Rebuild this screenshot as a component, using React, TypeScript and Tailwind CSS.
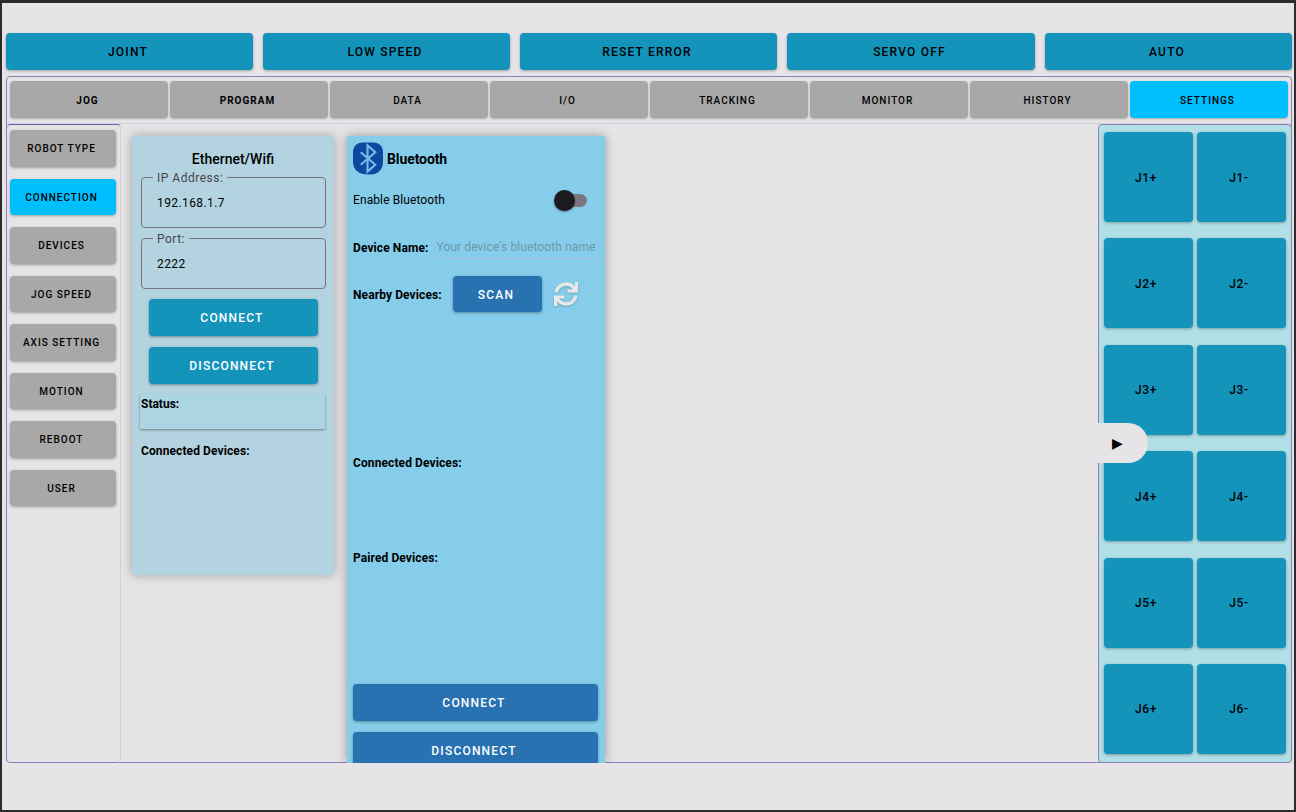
import { FaSync } from "react-icons/fa";

const TOP = ["JOINT", "LOW SPEED", "RESET ERROR", "SERVO OFF", "AUTO"];
const TABS = ["JOG", "PROGRAM", "DATA", "I/O", "TRACKING", "MONITOR", "HISTORY", "SETTINGS"];
const SIDE = ["ROBOT TYPE", "CONNECTION", "DEVICES", "JOG SPEED", "AXIS SETTING", "MOTION", "REBOOT", "USER"];
const JOINTS = ["J1", "J2", "J3", "J4", "J5", "J6"];

function Outlined({ label, value }: { label: string; value: string }) {
  return (
    <fieldset className="h-[56px] rounded border border-[#79747e] pl-[11px]">
      <legend className="relative top-px px-1 text-[12px] leading-[10px] tracking-[0.5px] text-[#49454f]">{label}</legend>
      <div className="mt-[12px] pl-1 text-[12px] leading-[18px] tracking-[0.4px] text-black">{value}</div>
    </fieldset>
  );
}

export default function App() {
  return (
    <div className="h-[812px] w-[1296px] overflow-hidden border-x-2 border-t-[3px] border-b-2 border-[#2b2b2d] bg-[#e6e4e6] font-['Roboto',sans-serif] text-black">
      {/* Top command buttons */}
      <div className="mt-[30px] flex h-[37px] gap-[10px] pl-1 pr-[2px]">
        {TOP.map((t, i) => (
          <button
            key={t}
            className={`${i === 2 ? "w-[257px]" : i === 3 ? "w-[248px]" : "w-[247px]"} rounded bg-[#1594bb] pr-[3px] text-[12px] font-medium tracking-[1.2px] shadow-[0_1px_3px_rgba(0,0,0,0.3)]`}
          >
            {t}
          </button>
        ))}
      </div>

      {/* Tabbed frame */}
      <div className="ml-1 mt-[6px] flex h-[687px] w-[1286px] flex-col rounded border border-[#8d7fb8]">
        <div className="flex h-[47px] shrink-0 gap-[2px] border-b border-[#d2cfda] pl-[3px] pt-1">
          {TABS.map((t, i) => (
            <button
              key={t}
              className={`h-[37px] w-[158px] rounded pr-[3px] pt-px text-[10px] tracking-[1px] shadow-[0_1px_2px_rgba(0,0,0,0.25)] ${i < 2 ? "font-bold" : "font-medium"} ${i === 7 ? "bg-[#00bfff]" : "bg-[#a8a8a8]"}`}
            >
              {t}
            </button>
          ))}
        </div>

        <div className="relative -mb-px -mr-px flex min-h-0 flex-1 overflow-hidden">
          {/* Side menu */}
          <div className="flex w-[114px] shrink-0 flex-col gap-[12px] rounded border-r border-t border-r-[#d2cfda] border-t-[#6a5ca8] pl-[3px] pt-[5px]">
            {SIDE.map((s, i) => (
              <button
                key={s}
                className={`h-[36.5px] w-[106px] shrink-0 rounded pr-[3px] pt-px text-[10px] font-medium tracking-[1px] shadow-[0_1px_3px_rgba(0,0,0,0.3)] ${i === 1 ? "bg-[#00bfff]" : "bg-[#a8a8a8]"}`}
              >
                {s}
              </button>
            ))}
          </div>

          {/* Ethernet panel */}
          <div className="ml-[11px] mt-[12px] flex h-[439px] w-[202px] shrink-0 flex-col bg-[#b2d3df] px-[8px] shadow-[0_0_10px_rgba(0,0,0,0.3)]">
            <div className="mt-[14px] text-center text-[14px] font-medium leading-[18px]">Ethernet/Wifi</div>
            <div className="mt-[4px] flex flex-col gap-[5px] pl-px">
              <Outlined label="IP Address:" value="192.168.1.7" />
              <Outlined label="Port:" value="2222" />
            </div>
            <button className="ml-[9px] mr-[8px] mt-[10px] h-[36.5px] shrink-0 rounded bg-[#1594bb] pr-[3px] pt-px text-[12px] font-medium tracking-[1.2px] text-white shadow-[0_1px_3px_rgba(0,0,0,0.35)]">
              CONNECT
            </button>
            <button className="ml-[9px] mr-[8px] mt-[11.5px] h-[36.5px] shrink-0 rounded bg-[#1594bb] pr-[3px] pt-px text-[12px] font-medium tracking-[1.2px] text-white shadow-[0_1px_3px_rgba(0,0,0,0.35)]">
              DISCONNECT
            </button>
            <div className="mt-[10.5px] h-[35px] w-[185px] shrink-0 bg-[#acd5e3] pl-px pt-[2px] text-[12px] font-bold leading-[16px] shadow-[0_1px_2px_rgba(0,0,0,0.4)]">
              Status:
            </div>
            <div className="mt-[14px] pl-px text-[12px] font-bold leading-[16px] tracking-[0.1px]">Connected Devices:</div>
          </div>

          {/* Bluetooth panel */}
          <div className="ml-[13px] mt-[12px] flex min-h-0 w-[258px] shrink-0 flex-col overflow-hidden bg-[#85cdea] pl-[6px] pr-[7px] shadow-[0_0_10px_rgba(0,0,0,0.35)]">
            <div className="mt-[6px] flex h-[33px] shrink-0 items-center gap-[4px]">
              <svg width="30" height="33" viewBox="0 0 31 33">
                <path d="M10 0h11c6 0 10 4 10 10v10c0 8-6 13-13 13h-2C6 33 0 28 0 20V10C0 4 4 0 10 0z" fill="#0b4a9e" />
                <path d="M8 10l15 13-8 7V3l8 7L8 23" fill="none" stroke="#7cb9e8" strokeWidth="2.2" />
              </svg>
              <span className="pt-px text-[14px] font-bold tracking-[-0.1px]">Bluetooth</span>
            </div>
            <div className="mt-[15px] flex h-[20px] shrink-0 items-center justify-between text-[12px]">
              <span className="tracking-[0.1px]">Enable Bluetooth</span>
              <span className="relative mr-[11px] block h-[13px] w-[22px] rounded-full bg-[#7d7680]">
                <span className="absolute left-[-11px] top-[-4px] block h-[21px] w-[21px] rounded-full bg-[#1d1b20] shadow-[0_1px_2px_rgba(0,0,0,0.4)]" />
              </span>
            </div>
            <div className="mt-[24px] flex h-[25px] shrink-0 items-center gap-[8px] text-[12px]">
              <span className="pt-[2px] font-bold tracking-[0.1px]">Device Name:</span>
              <span className="flex h-[25px] w-[159px] items-center whitespace-nowrap border-b border-[#a4bfd0] pt-[2px] tracking-[0.1px] text-[#6f97ab]">
                Your device's bluetooth name
              </span>
            </div>
            <div className="mt-[17px] flex h-[36px] shrink-0 items-center text-[12px]">
              <span className="w-[100px] pt-[2px] font-bold tracking-[0.1px]">Nearby Devices:</span>
              <button className="h-[36px] w-[89px] rounded bg-[#2872b2] pr-[3px] pt-px font-medium tracking-[1.2px] text-white shadow-[0_1px_3px_rgba(0,0,0,0.35)]">
                SCAN
              </button>
              <FaSync className="ml-[12px] text-[#e8e8e8] drop-shadow-[0_1px_1px_rgba(0,0,0,0.2)]" size={24} />
            </div>
            <div className="mt-[143px] shrink-0 text-[12px] font-bold leading-[16px] tracking-[0.1px]">Connected Devices:</div>
            <div className="mt-[79px] shrink-0 text-[12px] font-bold leading-[16px] tracking-[0.1px]">Paired Devices:</div>
            <button className="mt-[118px] h-[36.5px] shrink-0 rounded bg-[#2872b2] pr-[3px] pt-px text-[12px] font-medium tracking-[1.2px] text-white shadow-[0_1px_3px_rgba(0,0,0,0.35)]">
              CONNECT
            </button>
            <button className="mt-[11.5px] h-[36.5px] shrink-0 rounded bg-[#2872b2] pr-[3px] pt-px text-[12px] font-medium tracking-[1.2px] text-white shadow-[0_1px_3px_rgba(0,0,0,0.35)]">
              DISCONNECT
            </button>
          </div>

          {/* Jog keys */}
          <div className="ml-auto grid w-[194px] shrink-0 grid-cols-[89px_89px] content-start gap-x-[4px] gap-y-[16.4px] rounded border border-[#8d7fb8] bg-[#b0dfe5] pl-[5px] pt-[7px]">
            {JOINTS.flatMap((j) => [j + "+", j + "-"]).map((k) => (
              <button
                key={k}
                className="h-[90px] w-[89px] rounded bg-[#1594bb] pr-[5px] pt-px text-[12px] font-medium tracking-[0.6px] shadow-[0_1px_3px_rgba(0,0,0,0.3)]"
              >
                {k}
              </button>
            ))}
          </div>

          {/* Drawer handle over the jog keys */}
          <div className="absolute left-[1090px] top-[299px] flex h-[40px] w-[51px] items-center rounded-r-[20px] bg-[#e6e4e6] pl-[15px] text-[14px]">
            ▶
          </div>
        </div>
      </div>
    </div>
  );
}
